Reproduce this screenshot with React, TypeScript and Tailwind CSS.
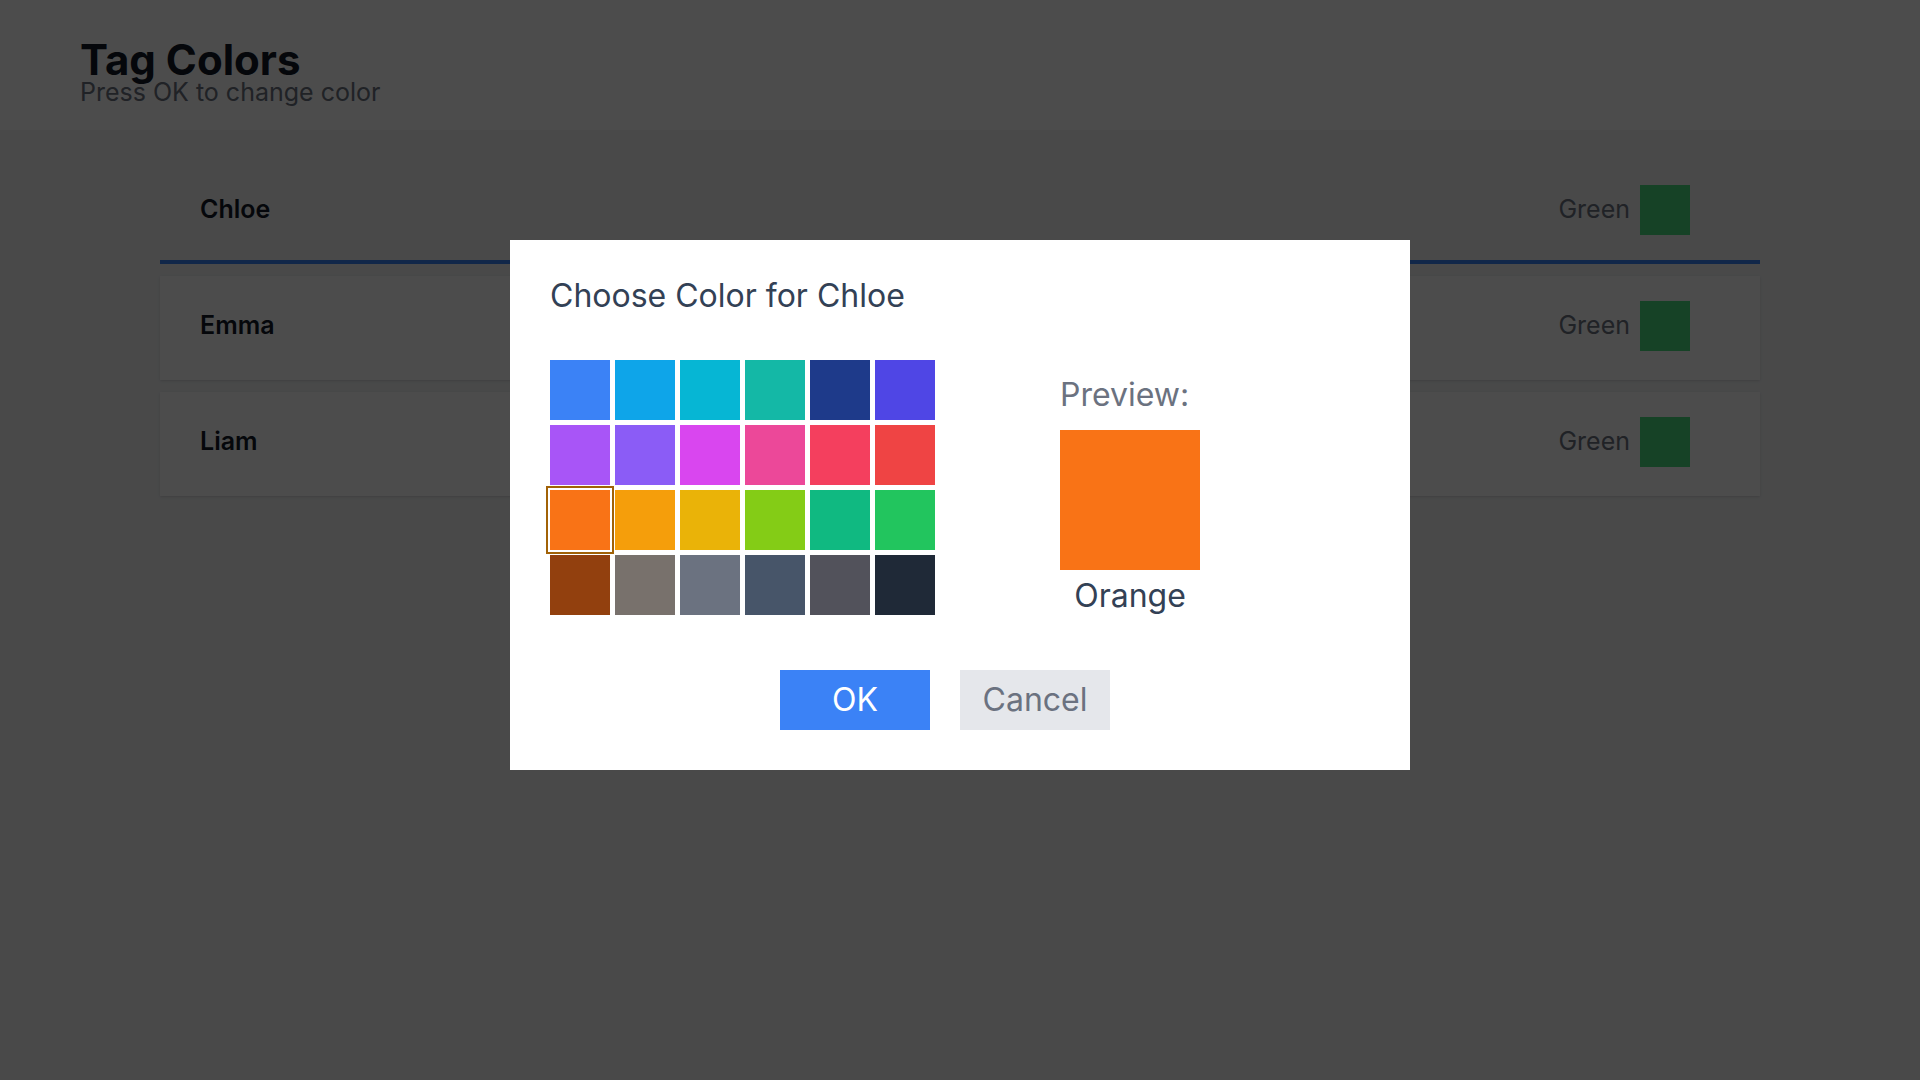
import { useState } from "react";

type Tag = {
  name: string;
  color: string;
  colorName: string;
};

// tailwind v3 palette hex values
const swatches: { name: string; className: string }[] = [
  { name: "Blue", className: "bg-[#3b82f6]" },
  { name: "Sky", className: "bg-[#0ea5e9]" },
  { name: "Cyan", className: "bg-[#06b6d4]" },
  { name: "Teal", className: "bg-[#14b8a6]" },
  { name: "Navy", className: "bg-[#1e3a8a]" },
  { name: "Indigo", className: "bg-[#4f46e5]" },
  { name: "Purple", className: "bg-[#a855f7]" },
  { name: "Violet", className: "bg-[#8b5cf6]" },
  { name: "Fuchsia", className: "bg-[#d946ef]" },
  { name: "Pink", className: "bg-[#ec4899]" },
  { name: "Rose", className: "bg-[#f43f5e]" },
  { name: "Red", className: "bg-[#ef4444]" },
  { name: "Orange", className: "bg-[#f97316]" },
  { name: "Amber", className: "bg-[#f59e0b]" },
  { name: "Yellow", className: "bg-[#eab308]" },
  { name: "Lime", className: "bg-[#84cc16]" },
  { name: "Emerald", className: "bg-[#10b981]" },
  { name: "Green", className: "bg-[#22c55e]" },
  { name: "Brown", className: "bg-[#92400e]" },
  { name: "Stone", className: "bg-[#78716c]" },
  { name: "Gray", className: "bg-[#6b7280]" },
  { name: "Slate", className: "bg-[#475569]" },
  { name: "Zinc", className: "bg-[#52525b]" },
  { name: "Charcoal", className: "bg-[#1f2937]" },
];

const initialTags: Tag[] = [
  { name: "Chloe", color: "bg-[#4ade80]", colorName: "Green" },
  { name: "Emma", color: "bg-[#4ade80]", colorName: "Green" },
  { name: "Liam", color: "bg-[#4ade80]", colorName: "Green" },
];

export default function App() {
  const [tags] = useState<Tag[]>(initialTags);
  const [focused] = useState(0);
  const [selected, setSelected] = useState(12);

  const current = swatches[selected];

  return (
    <div className="min-h-screen bg-[#f3f4f6] font-['Inter',sans-serif]">
      <header className="bg-white px-[80px] pt-[40px] pb-[25px]">
        <h1 className="text-[42px] leading-[40px] font-bold text-[#111827]">Tag Colors</h1>
        <p className="text-[25px] leading-none text-[#6b7280]">Press OK to change color</p>
      </header>

      <main className="px-[160px] pt-[30px] flex flex-col gap-[12px]">
        {tags.map((t, i) => (
          <div
            key={t.name}
            className={
              i === focused
                ? "h-[104px] flex items-center justify-between pl-10 pr-[70px] border-b-4 border-[#3b82f6]"
                : "h-[104px] flex items-center justify-between pl-10 pr-[70px] border-b-4 border-transparent bg-white shadow-sm"
            }
          >
            <span className="text-[25px] font-semibold text-[#111827]">{t.name}</span>
            <div className="flex items-center gap-[10px]">
              <span className="text-[25px] text-[#6b7280]">{t.colorName}</span>
              <div className={`w-[50px] h-[50px] ${t.color}`} />
            </div>
          </div>
        ))}
      </main>

      <div className="fixed inset-0 bg-black/70 flex justify-center items-start pt-[240px]">
        <div className="w-[900px] bg-white p-10">
          <h2 className="text-[32px] leading-[32px] text-[#334155] mb-[48px]">
            Choose Color for {tags[focused].name}
          </h2>

          <div className="flex items-start gap-[125px]">
            <div className="grid grid-cols-6 gap-[5px]">
              {swatches.map((s, i) => (
                <button
                  key={s.name}
                  onClick={() => setSelected(i)}
                  className={
                    i === selected
                      ? `w-[60px] h-[60px] ${s.className} outline-2 outline-offset-2 outline-[#a16207]`
                      : `w-[60px] h-[60px] ${s.className}`
                  }
                />
              ))}
            </div>

            <div className="mt-[11px] flex flex-col w-[140px]">
              <span className="text-[32px] leading-[48px] text-[#6b7280] mb-[11px]">Preview:</span>
              <div className={`w-[140px] h-[140px] ${current.className}`} />
              <span className="text-[32px] leading-[48px] text-[#334155] text-center mt-[2px]">
                {current.name}
              </span>
            </div>
          </div>

          <div className="mt-[50px] flex justify-center gap-[30px] pr-[30px]">
            <button className="w-[150px] h-[60px] bg-[#3b82f6] text-white text-[32px] flex items-center justify-center">
              OK
            </button>
            <button className="w-[150px] h-[60px] bg-[#e5e7eb] text-[#6b7280] text-[32px] flex items-center justify-center">
              Cancel
            </button>
          </div>
        </div>
      </div>
    </div>
  );
}
